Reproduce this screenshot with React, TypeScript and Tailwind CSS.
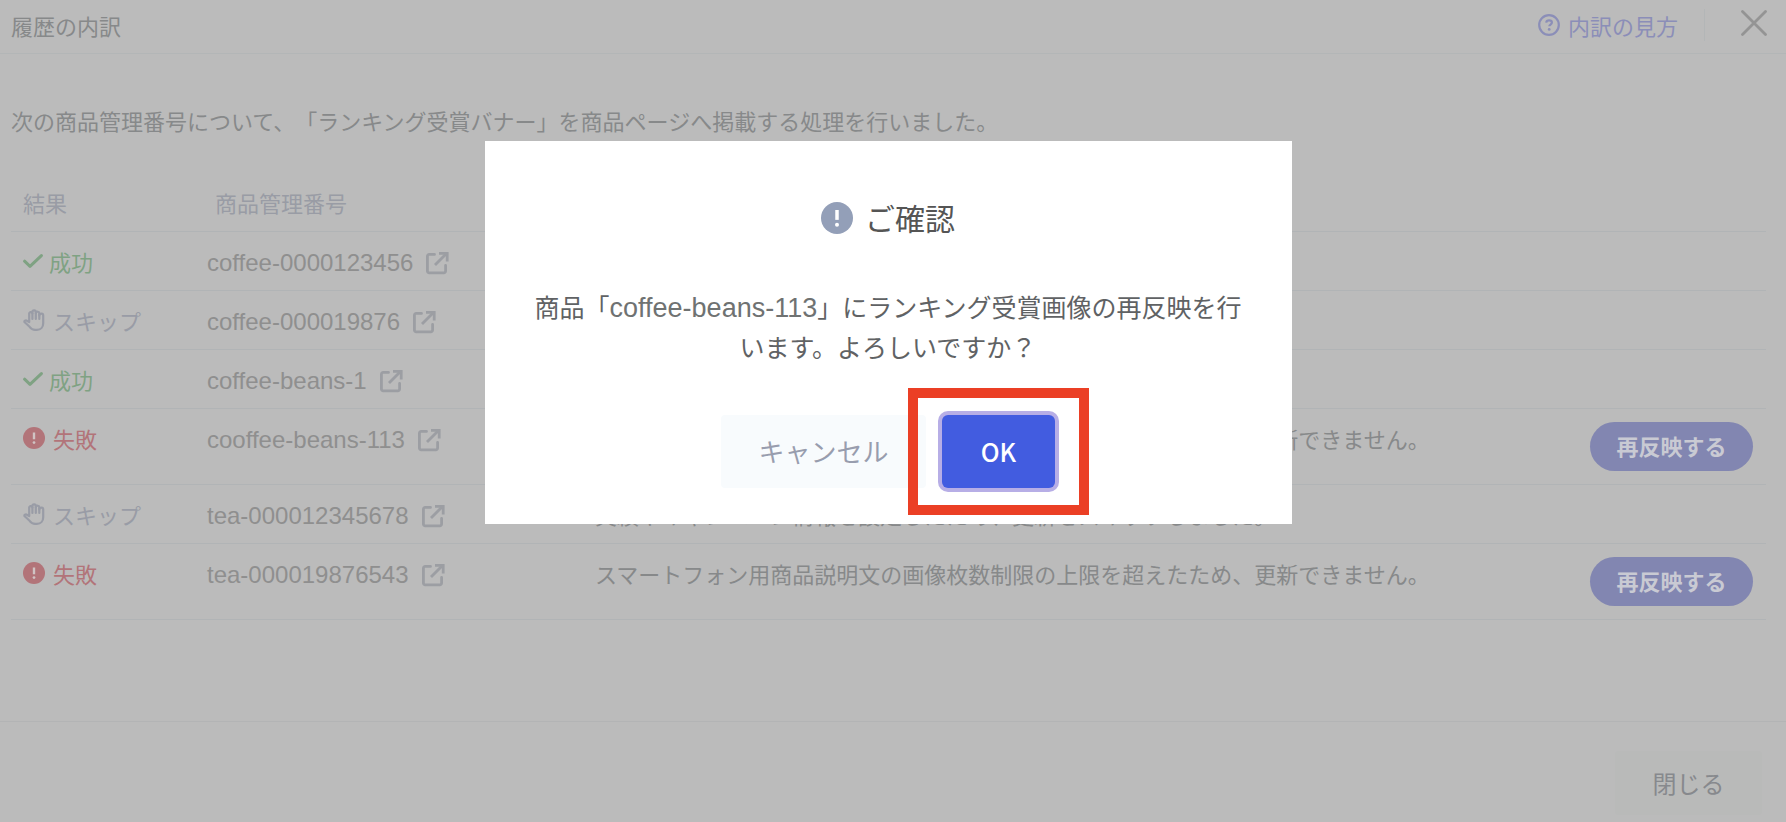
import React, { useState } from 'react';

type Result = 'success' | 'skip' | 'failure';

interface HistoryItem {
  id: string;
  result: Result;
  message?: string;
}

const LIMIT_MESSAGE = 'スマートフォン用商品説明文の画像枚数制限の上限を超えたため、更新できません。';

const items: HistoryItem[] = [
  { id: 'coffee-0000123456', result: 'success' },
  { id: 'coffee-000019876', result: 'skip' },
  { id: 'coffee-beans-1', result: 'success' },
  { id: 'cooffee-beans-113', result: 'failure', message: LIMIT_MESSAGE },
  {
    id: 'tea-000012345678',
    result: 'skip',
    message: '実績やキャンペーン情報を設定したため、更新をスキップしました。',
  },
  { id: 'tea-000019876543', result: 'failure', message: LIMIT_MESSAGE },
];

function AlertIcon({ className }: { className: string }) {
  return (
    <svg viewBox="0 0 24 24" className={className} aria-hidden="true">
      <circle cx="12" cy="12" r="12" fill="currentColor" />
      <path className="stroke-(--mark)" d="M12 6v7.4" strokeWidth="2.6" />
      <circle className="fill-(--mark)" cx="12" cy="17" r="1.5" />
    </svg>
  );
}

function CheckIcon() {
  return (
    <svg viewBox="0 0 20 14" className="w-5 h-3.5" fill="none" stroke="currentColor" strokeWidth="3" strokeLinecap="round" strokeLinejoin="round" aria-hidden="true">
      <path d="M1.6 7.2 7 12.3 18.4 1.6" />
    </svg>
  );
}

function HandIcon() {
  return (
    <svg viewBox="0 0 22 22" className="w-[22px] h-[22px]" fill="none" stroke="currentColor" strokeWidth="2.2" strokeLinecap="round" strokeLinejoin="round" aria-hidden="true">
      <path d="M6.2 13V5a1.6 1.6 0 0 1 3.2-.6V3a1.7 1.7 0 0 1 3.4 0v1.200a1.700 1.700 0 0 1 3.500.600v1.600a1.900 1.900 0 0 1 3.900.400v7.400c0 4-2.600 6.600-6.200 6.600h-1.800c-2.600 0-4.200-1.100-5.600-3l-4.900-4.500c-.9-1.300.9-2.600 2.200-1.600z" />
      <path d="M9.4 4.400v5.600M12.800 4.200V10M16.300 5.400V10" />
    </svg>
  );
}

function ExternalIcon() {
  return (
    <svg viewBox="0 0 24 24" className="w-6 h-6" fill="none" stroke="currentColor" strokeWidth="2.8" strokeLinejoin="round" aria-hidden="true">
      <path d="M9.5 3.4H4.2a1.8 1.8 0 0 0-1.8 1.8V20a1.8 1.8 0 0 0 1.8 1.8h14.6a1.8 1.8 0 0 0 1.8-1.8v-5.5" strokeLinecap="round" />
      <path d="M10 14 21 3" />
      <path d="M14 2.4h8.200v8.200" strokeLinejoin="miter" />
    </svg>
  );
}

function HelpIcon() {
  return (
    <svg viewBox="0 0 22 22" className="w-[22px] h-[22px]" fill="none" stroke="currentColor" strokeWidth="2.2" aria-hidden="true">
      <circle cx="11" cy="11" r="9.8" />
      <path d="M8.2 8.7c.2-1.6 1.3-2.3 2.9-2.3 1.7 0 2.8.9 2.8 2.2 0 1.9-2.6 2-2.6 3.7" />
      <circle cx="11.2" cy="15.4" r="1.4" fill="currentColor" stroke="none" />
    </svg>
  );
}

function ResultLabel({ result }: { result: Result }) {
  if (result === 'success') {
    return (
      <span className="flex items-center gap-1.5 text-[#7fa283]">
        <CheckIcon />
        成功
      </span>
    );
  }
  if (result === 'skip') {
    return (
      <span className="flex items-center gap-2 text-[#999ca6]">
        <HandIcon />
        スキップ
      </span>
    );
  }
  return (
    <span className="flex items-center gap-2 text-[#b27479]">
      <AlertIcon className="w-[22px] h-[22px] [--mark:#d0c4c4]" />
      失敗
    </span>
  );
}

export default function App() {
  const [confirming, setConfirming] = useState(true);

  return (
    <div className="relative min-h-screen flex flex-col bg-[#bbbbbb] text-[22px] leading-8 text-[#87898a] font-['Noto_Sans_CJK_JP',sans-serif] [text-spacing-trim:space-all]">
      {/* Header */}
      <header className="flex items-center justify-between h-[54px] pb-1 pl-[11px] pr-[19px] border-b border-[#b3b6b7]">
        <h1>履歴の内訳</h1>
        <div className="flex items-center">
          <a href="#help" className="flex items-center gap-2 text-[#8b8eb8]">
            <HelpIcon />
            内訳の見方
          </a>
          <span className="w-px h-8 ml-[26px] bg-[#b3b6b7]" />
          <button type="button" aria-label="閉じる" className="ml-9 pb-1 text-[#949494]">
            <svg viewBox="0 0 26 26" className="w-[26px] h-[26px]" fill="none" stroke="currentColor" strokeWidth="2.8" strokeLinecap="round">
              <path d="M1.5 1.5 24.5 24.5M24.5 1.5 1.5 24.5" />
            </svg>
          </button>
        </div>
      </header>

      {/* History */}
      <main className="flex-1 pt-[50px] pl-[11px] pr-5">
        <p>次の商品管理番号について、「ランキング受賞バナー」を商品ページへ掲載する処理を行いました。</p>

        <table className="w-full mt-[42px] table-fixed">
          <colgroup>
            <col className="w-[188px]" />
            <col className="w-[396px]" />
            <col />
            <col className="w-[190px]" />
          </colgroup>
          <thead>
            <tr className="h-[53px] border-b border-[#b1b4b6] text-left text-[#999ca5]">
              <th className="pb-1 pl-3 font-normal">結果</th>
              <th className="pb-1 pl-4 font-normal">商品管理番号</th>
              <td />
              <td />
            </tr>
          </thead>
          <tbody>
            {items.map((item) => (
              <tr key={item.id} className="h-[59px] border-b border-[#b1b4b6] align-top">
                <td className="pt-[13px] pl-3">
                  <ResultLabel result={item.result} />
                </td>
                <td className="pt-[15px] pl-2">
                  <a href={`#${item.id}`} className="flex items-center gap-3 text-2xl leading-8 text-[#8f8f8f] font-['Liberation_Sans',sans-serif]">
                    {item.id}
                    <span className="text-[#9c9ea3]">
                      <ExternalIcon />
                    </span>
                  </a>
                </td>
                <td className="pt-[13px] whitespace-nowrap">{item.message}</td>
                <td className="pr-[13px]">
                  {item.result === 'failure' && (
                    <button
                      type="button"
                      onClick={() => setConfirming(true)}
                      className="block w-[163px] h-[49px] my-[13px] pb-0.5 ml-auto rounded-full bg-[#8286b1] text-[#c9cad3] font-bold"
                    >
                      再反映する
                    </button>
                  )}
                </td>
              </tr>
            ))}
          </tbody>
        </table>
      </main>

      {/* Footer */}
      <footer className="flex justify-end pt-[29px] pr-6 pb-[7px] border-t border-[#b3b4b5]">
        <button type="button" className="w-[147px] h-16 rounded bg-[#b9bab9] text-2xl text-[#87898d]">
          閉じる
        </button>
      </footer>

      {/* Confirm dialog */}
      {confirming && (
        <div className="absolute inset-x-0 top-[141px] flex justify-center pr-[10px]">
          <div
            role="dialog"
            aria-labelledby="confirm-title"
            className="w-[807px] px-11 pt-14 pb-9 bg-white text-center text-[25px] leading-10 text-[#606264]"
          >
            <h2 id="confirm-title" className="flex items-center justify-center gap-3 text-3xl leading-10 text-[#555555]">
              <AlertIcon className="w-8 h-8 mt-0.5 text-[#939fb8] [--mark:#ffffff]" />
              ご確認
            </h2>
            <p className="mt-[49px]">
              商品「<span className="text-[27px] leading-none text-[#6f7272] font-['Liberation_Sans',sans-serif]">coffee-beans-113</span>
              」にランキング受賞画像の再反映を行います。よろしいですか？
            </p>
            <div className="flex justify-center gap-4 mt-[49px]">
              <button
                type="button"
                onClick={() => setConfirming(false)}
                className="w-[205px] h-[73px] pb-0.5 rounded bg-[#f8fbfd] text-[26px] text-[#989dae]"
              >
                キャンセル
              </button>
              <div className="relative">
                <button
                  type="button"
                  onClick={() => setConfirming(false)}
                  className="w-[113px] h-[73px] pb-0.5 rounded-md bg-[#425ce0] ring-4 ring-[#b7aee6] text-[25px] text-white font-medium"
                >
                  OK
                </button>
                <span className="absolute -inset-x-[34px] -inset-y-[27px] border-10 border-[#eb3f25] pointer-events-none" />
              </div>
            </div>
          </div>
        </div>
      )}
    </div>
  );
}
